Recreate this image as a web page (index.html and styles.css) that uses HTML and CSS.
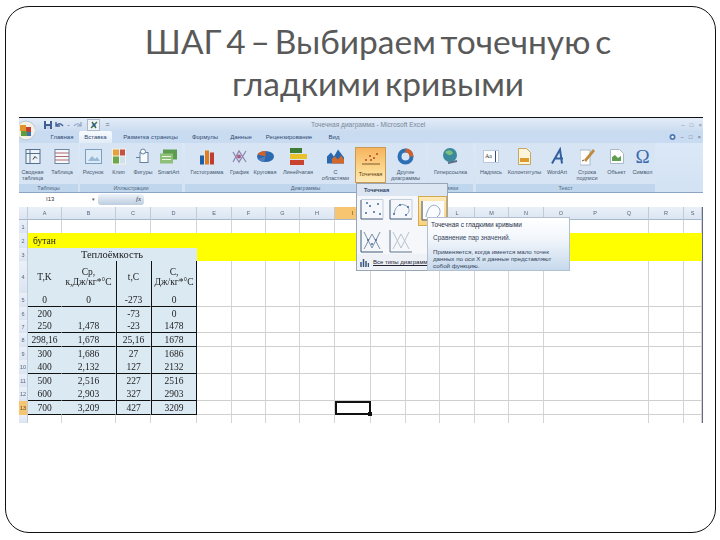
FILE: index.html
```html
<!DOCTYPE html>
<html lang="ru">
<head>
<meta charset="utf-8">
<title>ШАГ 4</title>
<link rel="stylesheet" href="styles.css">
</head>
<body>
<main class="slide">
  <h1 class="title">ШАГ 4 – Выбираем точечную с<br>гладкими кривыми</h1>
  <section class="shot">
    <div class="titlebar">
      <div class="qat">
        <svg width="10" height="10" viewBox="0 0 10 10"><rect x="1" y="1" width="8" height="8" fill="#3f5f92"/><rect x="3" y="1" width="4" height="3" fill="#e8eef6"/><rect x="3" y="6" width="4" height="3" fill="#c5d2e4"/></svg>
        <svg width="10" height="10" viewBox="0 0 10 10"><path d="M2 2v4h4M2 6c2-3 5-3 7 0" fill="none" stroke="#46639a" stroke-width="1.4"/></svg>
        <span class="qat-sep">-</span>
        <svg width="10" height="10" viewBox="0 0 10 10"><path d="M8 2v4H4M8 6C6 3 3 3 1 6" fill="none" stroke="#8ea3c0" stroke-width="1.2"/></svg>
        <span class="qat-btn"><svg width="10" height="10" viewBox="0 0 10 10"><path d="M2 8 8 2M3 2l4 6" stroke="#3b6f3b" stroke-width="1.4"/><circle cx="5" cy="5" r="1.5" fill="#2f5c9c"/></svg></span>
        <span class="qat-sep">=</span>
      </div>
      <div class="doc-title">Точечная диаграмма - Microsoft Excel</div>
      <div class="winbtns"><span>–</span><span>□</span><span>×</span></div>
    </div>
    <div class="tabs">
      <span class="tab t1">Главная</span>
      <span class="tab t2 on">Вставка</span>
      <span class="tab t3">Разметка страницы</span>
      <span class="tab t4">Формулы</span>
      <span class="tab t5">Данные</span>
      <span class="tab t6">Рецензирование</span>
      <span class="tab t7">Вид</span>
      <span class="tabs-right"><svg width="7" height="9" viewBox="0 0 7 9"><circle cx="3.5" cy="4" r="3" fill="#4c78b4"/><circle cx="3.5" cy="4" r="1.2" fill="#fff"/></svg><span>–</span><span>□</span><span>×</span></span>
    </div>
    <div class="ribbon">
      <div class="group g1">
        <div class="items">
          <div class="item w27"><svg width="16" height="16" viewBox="0 0 16 16"><rect x="1" y="1" width="14" height="14" fill="#eef3f9" stroke="#54708f"/><path d="M1 5h14M5 1v14" stroke="#54708f"/><path d="M8 11l2-3 2 2" fill="none" stroke="#333"/></svg><span>Сводная<br>таблица</span></div>
          <div class="item w32"><svg width="16" height="16" viewBox="0 0 16 16"><rect x="1" y="1" width="14" height="14" fill="#f6f8fb" stroke="#6f86a3"/><path d="M1 4.500h14M1 8h14M1 11.500h14" stroke="#b06a6a"/></svg><span>Таблица</span></div>
        </div>
        <div class="glabel">Таблицы</div>
      </div>
      <div class="group g2">
        <div class="items">
          <div class="item w26"><svg width="17" height="15" viewBox="0 0 17 15"><rect x=".5" y=".5" width="16" height="14" fill="#dcebf7" stroke="#7b9fbe"/><path d="M3 12l4-5 3 3 2-2 3 4z" fill="#9bb9d4"/></svg><span>Рисунок</span></div>
          <div class="item w25"><svg width="14" height="16" viewBox="0 0 14 16"><rect width="14" height="16" fill="#f2f2e6"/><rect x="1" y="1" width="6" height="6" fill="#e5a23a"/><rect x="8" y="1" width="5" height="6" fill="#c8504a"/><rect x="1" y="8" width="6" height="7" fill="#6aa84f"/><rect x="8" y="8" width="5" height="7" fill="#cfe0ef"/></svg><span>Клип</span></div>
          <div class="item w24"><svg width="15" height="16" viewBox="0 0 15 16"><rect x="4" y="4" width="8" height="10" fill="#f7fafd" stroke="#64809f"/><circle cx="7" cy="3" r="2.500" fill="#f7fafd" stroke="#64809f"/><path d="M0 9h4" stroke="#64809f"/></svg><span>Фигуры</span></div>
          <div class="item w27"><svg width="17" height="14" viewBox="0 0 17 14"><path d="M3 0h14v10H3z" fill="#5d9c4f"/><path d="M0 4h13v10H0z" fill="#8fc07a"/><path d="M2 7h9M2 10h9" stroke="#e8f3e0"/></svg><span>SmartArt</span></div>
        </div>
        <div class="glabel">Иллюстрации</div>
      </div>
      <div class="group g3">
        <div class="items">
          <div class="item w44"><svg width="14" height="16" viewBox="0 0 14 16"><rect x="0" y="7" width="4" height="9" fill="#1f5fa8"/><rect x="5" y="2" width="4" height="14" fill="#e27a1e"/><rect x="10" y="4" width="4" height="12" fill="#c23b2e"/></svg><span>Гистограмма</span></div>
          <div class="item w21"><svg width="15" height="15" viewBox="0 0 15 15"><path d="M1 13 7 2l7 11M1 3l6 10 7-11" fill="none" stroke="#8f82aa" stroke-width="1.2"/><circle cx="7" cy="7.500" r="2" fill="#a85c80"/></svg><span>График</span></div>
          <div class="item w30"><svg width="17" height="13" viewBox="0 0 17 13"><ellipse cx="8.500" cy="6.500" rx="8.500" ry="5.500" fill="#2a69b0"/><path d="M8.500 6.500V1a8.500 5.500 0 0 0-8 3.500z" fill="#d0622a"/><path d="M8.500 6.500 1 9a8 5 0 0 0 6 3z" fill="#4f7dbb"/></svg><span>Круговая</span></div>
          <div class="item w36"><svg width="17" height="17" viewBox="0 0 17 17"><rect width="12" height="5" fill="#3e7d33"/><rect y="6" width="17" height="5" fill="#e9c12b"/><rect y="12" width="14" height="5" fill="#c9442e"/></svg><span>Линейчатая</span></div>
          <div class="item w39"><svg width="17" height="14" viewBox="0 0 17 14"><path d="M0 14V7l4-4 3 4 4-7 6 8v6z" fill="#2a67ad"/><path d="M5 14V9l3-2 3 3 3-4 3 4v4z" fill="#d3682c"/></svg><span>С<br>областями</span></div>
          <div class="item w31 hot"><svg width="18" height="13" viewBox="0 0 18 13"><g fill="#b9472c"><circle cx="4" cy="8" r="1"/><circle cx="8" cy="4" r="1"/><circle cx="12" cy="6" r="1"/><circle cx="15" cy="2" r="1"/><circle cx="9" cy="8" r="1"/></g><path d="M0 12h18" stroke="#7d5a2c"/></svg><span>Точечная</span></div>
          <div class="item w39"><svg width="17" height="17" viewBox="0 0 17 17"><circle cx="8.500" cy="8.500" r="6" fill="none" stroke="#2d6fb5" stroke-width="4"/><path d="M8.500 .5a8 8 0 0 1 8 8h-4a4 4 0 0 0-4-4z" fill="#d2602a"/></svg><span>Другие<br>диаграммы</span></div>
        </div>
        <div class="glabel">Диаграммы</div>
      </div>
      <div class="group g4">
        <div class="items">
          <div class="item w45"><svg width="17" height="17" viewBox="0 0 17 17"><circle cx="8" cy="7" r="7" fill="#3a8a9c"/><path d="M3 4c3-3 7-2 8 1-2 3-5 3-8-1z" fill="#7cbf7a"/><path d="M6 15l9-2" stroke="#5b6f88" stroke-width="2"/></svg><span>Гиперссылка</span></div>
        </div>
        <div class="glabel">Связи</div>
      </div>
      <div class="group g5">
        <div class="items">
          <div class="item w30"><svg width="16" height="13" viewBox="0 0 16 13"><rect x=".5" y=".5" width="15" height="12" fill="#fff" stroke="#b9cade"/><path d="M12.500 1v11" stroke="#3a4f7a"/><text x="2" y="8" class="ico-text">Аa</text></svg><span>Надпись</span></div>
          <div class="item w37"><svg width="13" height="17" viewBox="0 0 13 17"><path d="M.5.5h8l4 4v12H.5z" fill="#fdf4dc" stroke="#c9a55e"/><rect x="2" y="10" width="9" height="4" fill="#dd9a2c"/></svg><span>Колонтитулы</span></div>
          <div class="item w28"><svg width="13" height="16" viewBox="0 0 13 16"><path d="M1 15 9 1l2 14M3 10h9" fill="none" stroke="#34609f" stroke-width="2"/></svg><span>WordArt</span></div>
          <div class="item w32"><svg width="15" height="17" viewBox="0 0 15 17"><rect y="2" width="10" height="15" fill="#fff" stroke="#aab8c8"/><path d="M4 12 13 1l2 2-9 11z" fill="#c08a3c"/><path d="M2 13l2-1" stroke="#555"/></svg><span>Строка<br>подписи</span></div>
          <div class="item w27"><svg width="14" height="15" viewBox="0 0 14 15"><path d="M.5.5h9l4 4v10H.5z" fill="#fff" stroke="#aab8c8"/><path d="M2 12V8l3-2 3 3 3-2v5z" fill="#5f9d50"/></svg><span>Объект</span></div>
          <div class="item w25"><span class="omega">Ω</span><span>Символ</span></div>
        </div>
        <div class="glabel">Текст</div>
      </div>
    </div>
    <div class="formula">
      <span class="namebox">I13</span>
      <span class="namedrop">▾</span>
      <span class="fxbox"><i>fx</i></span>
    </div>
    <table class="sheet">
      <colgroup>
        <col class="c9"><col class="c34"><col class="c54"><col class="c35"><col class="c46"><col class="c35"><col class="c34"><col class="c34"><col class="c35"><col class="c36"><col class="c35"><col class="c34"><col class="c35"><col class="c34"><col class="c35"><col class="c105"><col class="c35"><col class="c18">
      </colgroup>
      <thead>
        <tr class="r13"><th></th><th>A</th><th>B</th><th>C</th><th>D</th><th>E</th><th>F</th><th>G</th><th>H</th><th class="selhead">I</th><th>J</th><th>K</th><th>L</th><th>M</th><th>N</th><th class="triple"><span>O</span><span>P</span><span>Q</span></th><th>R</th><th>S</th></tr>
      </thead>
      <tbody>
        <tr class="r13"><th>1</th><td></td><td></td><td></td><td></td><td></td><td></td><td></td><td></td><td></td><td></td><td></td><td></td><td></td><td></td><td></td><td></td><td></td></tr>
        <tr class="r15 yellow"><th>2</th><td colspan="4" class="butane">бутан</td><td></td><td></td><td></td><td></td><td></td><td></td><td></td><td></td><td></td><td></td><td></td><td></td><td></td></tr>
        <tr class="r13 yellow"><th>3</th><td colspan="4" class="d caption">Теплоёмкость</td><td></td><td></td><td></td><td></td><td></td><td></td><td></td><td></td><td></td><td></td><td></td><td></td><td></td></tr>
        <tr class="r32"><th>4</th><td class="d">T,K</td><td class="d">Ср,<br>к,Дж/кг*°C</td><td class="d v">t,C</td><td class="d v e">C,<br>Дж/кг*°C</td><td></td><td></td><td></td><td></td><td></td><td></td><td></td><td></td><td></td><td></td><td></td><td></td><td></td></tr>
        <tr class="r14 ln"><th>5</th><td class="d">0</td><td class="d">0</td><td class="d v">-273</td><td class="d v e">0</td><td></td><td></td><td></td><td></td><td></td><td></td><td></td><td></td><td></td><td></td><td></td><td></td><td></td></tr>
        <tr class="r13"><th>6</th><td class="d">200</td><td class="d"></td><td class="d v">-73</td><td class="d v e">0</td><td></td><td></td><td></td><td></td><td></td><td></td><td></td><td></td><td></td><td></td><td></td><td></td><td></td></tr>
        <tr class="r13 ln"><th>7</th><td class="d">250</td><td class="d">1,478</td><td class="d v">-23</td><td class="d v e">1478</td><td></td><td></td><td></td><td></td><td></td><td></td><td></td><td></td><td></td><td></td><td></td><td></td><td></td></tr>
        <tr class="r14 ln"><th>8</th><td class="d">298,16</td><td class="d">1,678</td><td class="d v">25,16</td><td class="d v e">1678</td><td></td><td></td><td></td><td></td><td></td><td></td><td></td><td></td><td></td><td></td><td></td><td></td><td></td></tr>
        <tr class="r13"><th>9</th><td class="d">300</td><td class="d">1,686</td><td class="d v">27</td><td class="d v e">1686</td><td></td><td></td><td></td><td></td><td></td><td></td><td></td><td></td><td></td><td></td><td></td><td></td><td></td></tr>
        <tr class="r14 ln"><th>10</th><td class="d">400</td><td class="d">2,132</td><td class="d v">127</td><td class="d v e">2132</td><td></td><td></td><td></td><td></td><td></td><td></td><td></td><td></td><td></td><td></td><td></td><td></td><td></td></tr>
        <tr class="r13"><th>11</th><td class="d">500</td><td class="d">2,516</td><td class="d v">227</td><td class="d v e">2516</td><td></td><td></td><td></td><td></td><td></td><td></td><td></td><td></td><td></td><td></td><td></td><td></td><td></td></tr>
        <tr class="r14 ln"><th>12</th><td class="d">600</td><td class="d">2,903</td><td class="d v">327</td><td class="d v e">2903</td><td></td><td></td><td></td><td></td><td></td><td></td><td></td><td></td><td></td><td></td><td></td><td></td><td></td></tr>
        <tr class="r14 ln"><th class="selhead">13</th><td class="d">700</td><td class="d">3,209</td><td class="d v">427</td><td class="d v e">3209</td><td></td><td></td><td></td><td></td><td class="sel"></td><td></td><td></td><td></td><td></td><td></td><td></td><td></td><td></td></tr>
        <tr class="r8"><th></th><td></td><td></td><td></td><td></td><td></td><td></td><td></td><td></td><td></td><td></td><td></td><td></td><td></td><td></td><td></td><td></td><td></td></tr>
      </tbody>
    </table>

    <svg class="office" width="18" height="21" viewBox="0 0 18 21"><circle cx="9" cy="10.500" r="9.500" fill="#f3f1e6" stroke="#b7c4d3"/><rect x="3" y="5" width="6" height="6" fill="#e2942a"/><rect x="9" y="7" width="5" height="5" fill="#c5412f"/><rect x="4" y="11" width="6" height="5" fill="#5f9d3a"/><rect x="10" y="12" width="4" height="4" fill="#3f70b0"/></svg>

    <div class="menu">
      <div class="menu-head">Точечная</div>
      <div class="menu-grid">
        <span class="chart"><svg width="24" height="21" viewBox="0 0 24 21"><path d="M1 1v19h22" fill="none" stroke="#3f5877"/><path d="M1 .5h22v19" fill="none" stroke="#c3cedb"/><g fill="#3f6aa3"><circle cx="6" cy="14" r="1"/><circle cx="10" cy="7" r="1"/><circle cx="14" cy="13" r="1"/><circle cx="18" cy="5" r="1"/><circle cx="20" cy="15" r="1"/><circle cx="7" cy="4" r="1"/></g></svg></span>
        <span class="chart"><svg width="24" height="21" viewBox="0 0 24 21"><path d="M1 1v19h22" fill="none" stroke="#3f5877"/><path d="M1 .5h22v19" fill="none" stroke="#c3cedb"/><path d="M5 15C7 4 14 4 19 8c2 3 1 6-2 8" fill="none" stroke="#8da4bd"/><g fill="#3f6aa3"><circle cx="5" cy="15" r="1"/><circle cx="11" cy="6" r="1"/><circle cx="19" cy="8" r="1"/><circle cx="17" cy="16" r="1"/></g></svg></span>
        <span class="chart active"><svg width="24" height="21" viewBox="0 0 24 21"><rect x="2" y="1" width="21" height="18" fill="#fbfcfe"/><path d="M1 1v19h22" fill="none" stroke="#3f5877"/><path d="M5 17C7 4 14 3 18 8c2 3 1 7-2 9" fill="none" stroke="#8da4bd"/></svg></span>
        <span class="chart"><svg width="24" height="24" viewBox="0 0 24 24"><path d="M1 1v22h22" fill="none" stroke="#3f5877"/><path d="M4 3 12 19 20 3M4 20 12 5l8 15" fill="none" stroke="#7b90a8"/><g fill="#3f6aa3"><circle cx="8" cy="11" r="1"/><circle cx="16" cy="11" r="1"/><circle cx="12" cy="15" r="1"/></g></svg></span>
        <span class="chart"><svg width="24" height="24" viewBox="0 0 24 24"><path d="M1 1v22h22" fill="none" stroke="#60748c"/><path d="M4 3 12 19 20 3M4 20 12 5l8 15" fill="none" stroke="#b7c3d0"/></svg></span>
      </div>
      <div class="menu-foot"><svg width="9" height="9" viewBox="0 0 9 9"><path d="M1 9V4M3.500 9V1M6 9V3M8.500 9V5" stroke="#38567d" stroke-width="1.500"/></svg><span>Все типы диаграмм...</span></div>
    </div>
    <div class="tip">
      <b>Точечная с гладкими кривыми</b>
      <p class="tip-sub">Сравнение пар значений.</p>
      <p class="tip-body">Применяется, когда имеется мало точек<br>данных по оси X и данные представляют<br>собой функцию.</p>
    </div>
  </section>
</main>
</body>
</html>
```
FILE: styles.css
```css
* { box-sizing: border-box; }
html, body { margin: 0; background: #fff; }
body { width: 720px; height: 540px; overflow: hidden; font-family: "Liberation Sans", sans-serif; }

.slide {
  width: 711px;
  height: 527px;
  margin: 6px 0 0 5px;
  padding: 13px 0 0 13px;
  border: 1px solid #111;
  border-radius: 24px;
  background: #fff;
}
.title {
  width: 684px;
  height: 85px;
  margin: 0 0 12px;
  padding-left: 34px;
  font: 400 33.5px/42px Lato, "Open Sans", sans-serif;
  word-spacing: -3.8px;
  color: #595959;
  text-align: center;
}

.shot {
  position: relative;
  width: 684px;
  height: 306px;
  border-top: 1px solid #111;
  filter: blur(.4px);
  overflow: hidden;
  font-size: 5.5px;
  color: #42536b;
}

.titlebar {
  display: flex;
  align-items: center;
  height: 13px;
  padding-left: 24px;
  background: linear-gradient(#e3ecf8, #ccdcf0);
}
.qat { display: flex; align-items: center; gap: 1px; width: 268px; }
.qat-sep { width: 7px; text-align: center; color: #566; font-size: 7px; }
.qat-btn { display: flex; align-items: center; justify-content: center; width: 13px; height: 12px; margin: 0 3px; background: #f0f4f9; border: 1px solid #aeb9c8; }
.doc-title { width: 110px; font-size: 6.6px; color: #7a8797; white-space: nowrap; }
.winbtns { display: flex; gap: 5px; margin-left: auto; padding-right: 1px; color: #7c8896; font-size: 6px; }

.tabs {
  display: flex;
  align-items: center;
  height: 12px;
  padding-left: 26px;
  background: #c9dbf1;
}
.tab { display: block; height: 12px; line-height: 12px; text-align: center; font-size: 6px; color: #2f4a70; white-space: nowrap; }
.t1 { width: 34px; }
.t2 { width: 33px; }
.t3 { width: 77px; margin-left: 0; }
.t4 { width: 32px; }
.t5 { width: 40px; }
.t6 { width: 56px; }
.t7 { width: 34px; }
.on { background: linear-gradient(#f8fbfe, #e2ecf7); border-radius: 2px 2px 0 0; }
.tabs-right { display: flex; align-items: center; gap: 5px; margin-left: auto; padding-right: 2px; color: #5d6e86; font-size: 6px; }

.ribbon {
  display: flex;
  height: 50px;
  padding-right: 0;
  background: linear-gradient(#dbe8f7, #d3e2f4);
  border-bottom: 1px solid #8ba6c4;
}
.group { display: flex; flex-direction: column; height: 49px; background: #d6e4f4; }
.g1 { width: 59px; margin-right: 2px; }
.g2 { width: 102px; margin-right: 3px; }
.g3 { width: 241px; margin-right: 2px; }
.g4 { width: 45px; margin-right: 3px; }
.g5 { width: 179px; }
.items { display: flex; flex: 1; }
.item {
  display: flex;
  flex-direction: column;
  align-items: center;
  flex: none;
  height: 36px;
  margin-top: 4px;
  line-height: 6px;
  text-align: center;
  color: #46566e;
  white-space: nowrap;
}
.item svg { flex: none; height: 19px; margin-bottom: 3px; }
.w21 { width: 21px; } .w24 { width: 24px; } .w25 { width: 25px; } .w26 { width: 26px; }
.w27 { width: 27px; } .w28 { width: 28px; } .w30 { width: 30px; } .w31 { width: 31px; }
.w32 { width: 32px; } .w36 { width: 36px; } .w37 { width: 37px; } .w39 { width: 39px; }
.w44 { width: 44px; } .w45 { width: 45px; }
.hot { background: linear-gradient(#f6b45e, #fbd78d 60%, #fdeab8); border: 1px solid #c89a52; color: #5d3d12; padding-top: 1px; }
.ico-text { font: 6px "Liberation Serif", serif; fill: #333; }
.omega { height: 22px; font: 19px/19px "Liberation Serif", serif; color: #3a6ab0; }
.glabel { height: 8px; line-height: 8px; text-align: center; font-size: 5.5px; color: #4c6583; background: #bfd6ec; }

.formula { display: flex; align-items: center; height: 14px; padding-bottom: 2px; background: #fff; border-bottom: 0; }
.namebox { width: 73px; padding-left: 27px; font-size: 6px; color: #333; }
.namedrop { width: 6px; color: #555; font-size: 5px; }
.fxbox { display: flex; justify-content: flex-end; width: 46px; height: 11px; padding-right: 3px; background: linear-gradient(#eef3f9, #bccde0); border-radius: 3px; font: 7px/11px "Liberation Serif", serif; color: #445; }

.sheet { table-layout: fixed; width: 683px; border-collapse: separate; border-spacing: 0; border-right: 1px solid #676a85; }
.c9 { width: 9px; } .c18 { width: 18px; } .c34 { width: 34px; } .c35 { width: 35px; } .c36 { width: 36px; }
.c46 { width: 46px; } .c54 { width: 54px; } .c105 { width: 105px; }
.r8 { height: 8px; } .r13 { height: 13px; } .r14 { height: 14px; } .r15 { height: 15px; } .r32 { height: 32px; }
.sheet th { padding: 0; overflow: hidden; font-weight: 400; font-size: 5.5px; color: #56657b; background: linear-gradient(#eaf0f8, #dbe5f2); border-right: 1px solid #bfcbd9; }
.sheet thead th { border-bottom: 1px solid #a9b9cb; }
.sheet td { padding: 0; overflow: hidden; border-right: 1px solid #d4d4d4; font: 9.5px/10px "Liberation Serif", serif; color: #222; text-align: center; }
.sheet .triple { white-space: nowrap; text-align: left; }
.triple span { display: inline-block; width: 34px; text-align: center; }
.ln td { border-bottom: 1px solid #cfcfcf; }
.yellow td { background: #ffff00; border-right-color: #ffff00; }
.sheet .butane { padding-left: 5px; text-align: left; background: #ffff00; }
.sheet .d { background: #dbe9f3; border-right-color: #dbe9f3; }
.sheet .caption { font-size: 10.5px; }
.sheet .v { border-left: 1px solid #111; }
.sheet .e { border-right: 1px solid #111; }
.ln .d { border-bottom-color: #111; }
.sheet .selhead { background: #f7c46f; color: #5d4a20; }
.sheet .sel { position: relative; overflow: visible; outline: 2px solid #111; outline-offset: -2px; }
.sel::after { content: ""; position: absolute; right: -2px; bottom: -2px; width: 4px; height: 4px; background: #111; }

.office { position: absolute; left: -2px; top: 2px; }

.menu {
  position: absolute;
  left: 337px;
  top: 65px;
  width: 92px;
  height: 88px;
  background: #f5f7fa;
  border: 1px solid #9aa6b5;
}
.menu-head { height: 12px; padding-left: 7px; font-weight: 700; font-size: 5.5px; line-height: 12px; color: #2e4362; background: #dbe6f2; }
.menu-grid { display: grid; grid-template-columns: 24px 24px 29px; column-gap: 5px; row-gap: 9px; padding: 3px 0 0 3px; height: 57px; align-items: start; }
.chart { display: block; line-height: 0; }
.active { height: 30px; margin: -3px 0 -9px; padding: 3px 2px; background: linear-gradient(#fdeab8, #fbd27c); border: 1px solid #d5a94f; }
.menu-foot { display: flex; align-items: center; gap: 4px; height: 16px; margin-top: 1px; padding-left: 3px; font-size: 6px; color: #223; background: #eef2f7; }
.menu-foot span { text-decoration: underline; text-decoration-thickness: .3px; white-space: nowrap; }

.tip {
  position: absolute;
  left: 408px;
  top: 99px;
  width: 143px;
  height: 54px;
  padding: 3px 0 0 3px;
  background: linear-gradient(#fff, #f2f6fb 40%, #c6d9ec);
  border: 1px solid #b3c0cf;
  font-size: 6.5px;
  line-height: 7px;
  color: #33445c;
}
.tip b { display: block; font-weight: 400; color: #1f2f46; }
.tip p { margin: 0; padding-left: 2px; }
.tip .tip-sub { margin: 6px 0 7px; }
.tip .tip-body { font-size: 6.2px; }
```
